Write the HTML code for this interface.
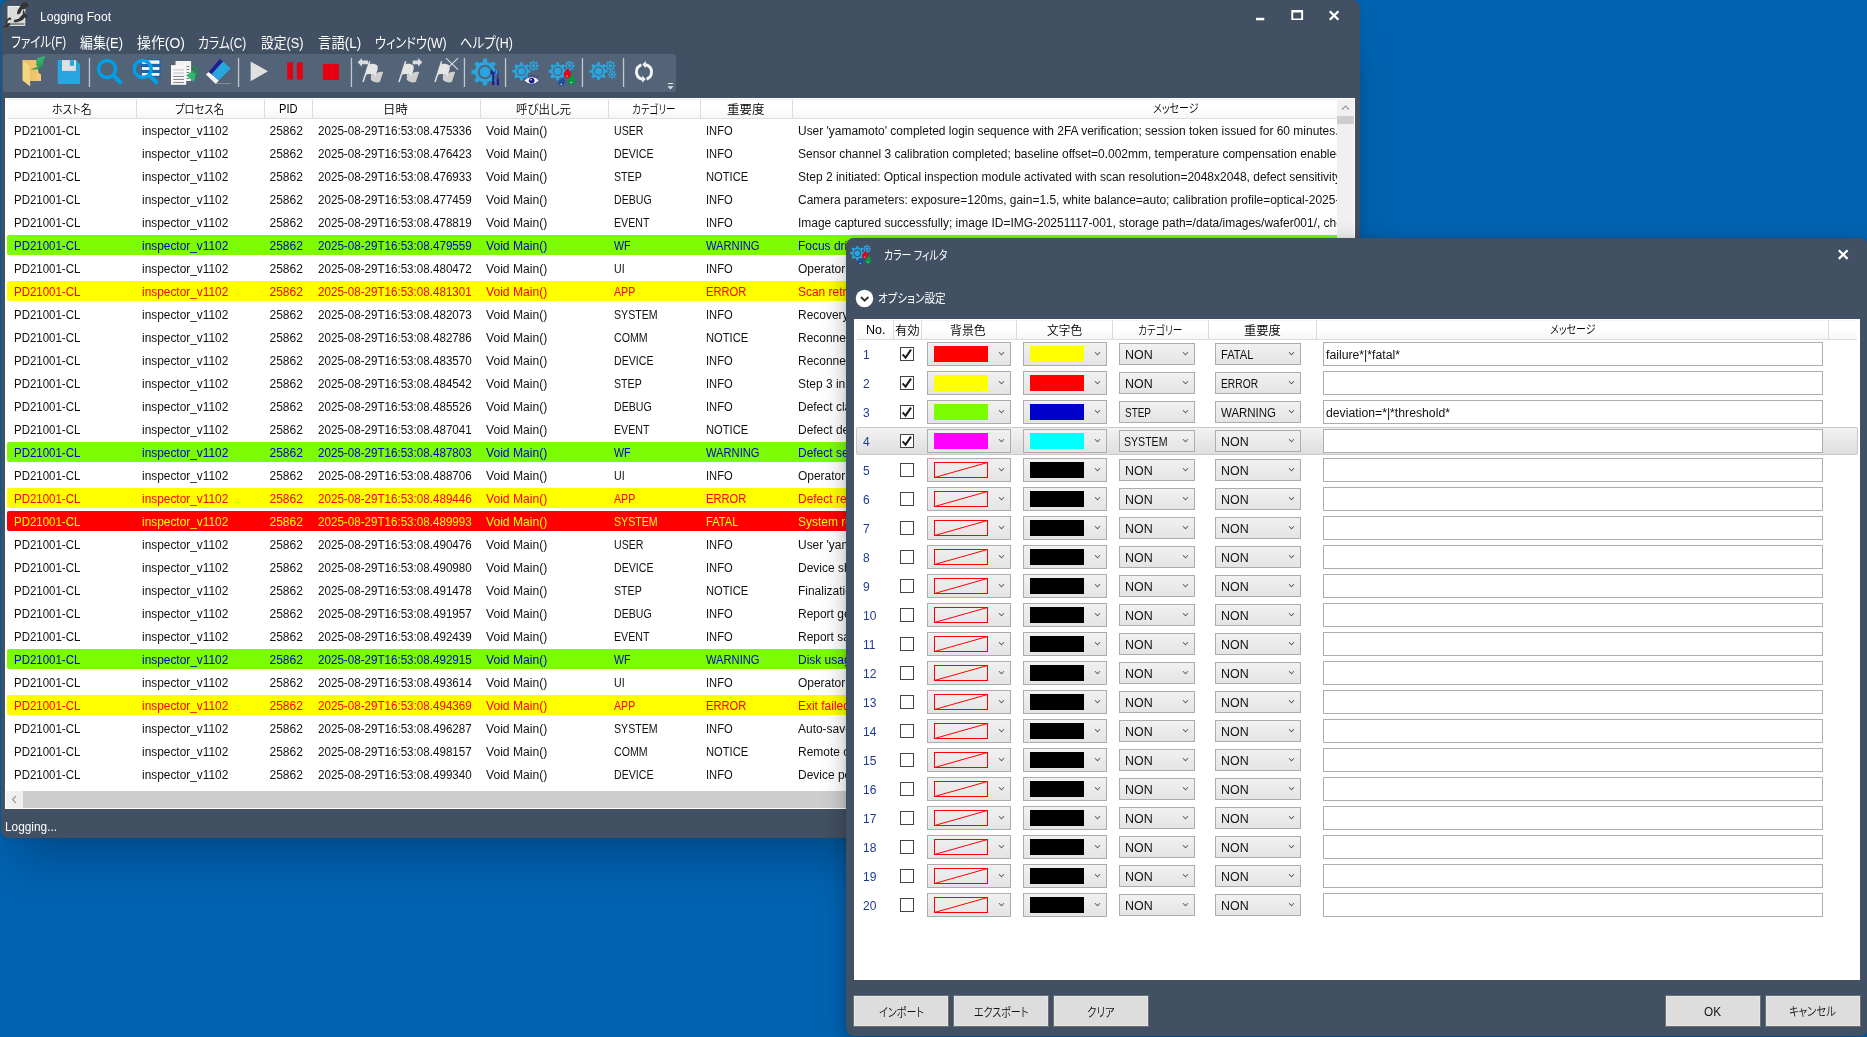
<!DOCTYPE html><html lang="ja"><head><meta charset="utf-8"><title>Logging Foot</title><style>*{box-sizing:border-box;margin:0;padding:0}
html,body{width:1867px;height:1037px;overflow:hidden;background:#0063b1}
body{position:relative;font-family:"Liberation Sans","Noto Sans CJK JP",sans-serif;font-size:12px;color:#000}
b,i,u,s{font-weight:normal;font-style:normal;text-decoration:none}
#desk{position:absolute;left:0;top:0;width:1867px;height:1037px;background:linear-gradient(180deg,#0063b1 0%,#0063b1 100%)}
#mw{will-change:transform;position:absolute;left:1px;top:0;width:1359px;height:838px;background:#415062;border-radius:8px 8px 0 8px;box-shadow:0 34px 44px -14px rgba(0,10,30,.27),0 0 8px rgba(0,10,30,.1)}
#mw-title{position:absolute;left:39px;top:9px;color:#fff;font-size:12px;line-height:16px;white-space:nowrap}
#menu{position:absolute;left:10px;top:33px;color:#fff;font-size:14px;line-height:20px;white-space:nowrap;font-feature-settings:"palt"}
#menu span{display:inline-block;margin-right:14px}
#tb{position:absolute;left:2px;top:54px;width:673px;height:38px;background:#536378;border-radius:3px}
#grid{position:absolute;left:4px;top:98px;width:1350px;height:711px;background:#fff;overflow:hidden}
#ghead,#dhead{position:absolute;left:0;top:1px;height:20px;width:100%}
#ghead{width:1332px;overflow:hidden}
.h{position:absolute;top:0;height:20px;line-height:19px;text-align:center;font-size:12.5px;border-top:1px solid #f3f3f3;border-right:1px solid #dcdcdc;border-bottom:1px solid #dedede;background:linear-gradient(#fff 0%,#fff 40%,#f5f6f7 100%);white-space:nowrap;font-feature-settings:"palt"}
.r{position:absolute;left:2px;width:1330px;height:20px;border-radius:2px 0 0 2px;overflow:hidden;color:#111}
.r i{position:absolute;top:0;line-height:23px;white-space:nowrap;font-size:12px;transform-origin:0 50%}
.c1{left:6.5px;transform:scaleX(.956)}.c2{left:134.5px;transform:scaleX(.99)}.c3{left:262.5px}.c4{left:310.5px;transform:scaleX(.968)}.c5{left:479px;transform:scaleX(1.01)}.c6{left:606.5px;transform:scaleX(.885)}.c7{left:698.5px;transform:scaleX(.93)}.c8{left:790.5px;transform:scaleX(.997)}
.r.cg{background:#7cfc00;color:#0000cd}
.r.cy{background:#ffff00;color:#ff0000}
.r.cr{background:#ff0000;color:#ffff00}
#vs{position:absolute;left:1332px;top:1px;width:17px;height:692px;background:#f0f0f0}
#vs svg,#hs svg{position:absolute;left:0;top:0}
#vthumb{position:absolute;left:0;top:17px;width:17px;height:8px;background:#cdcdcd}
#hs{position:absolute;left:1px;top:693px;width:1331px;height:17px;background:#f0f0f0}
#hthumb{position:absolute;left:17px;top:0;width:1400px;height:17px;background:#cdcdcd}
#status{position:absolute;left:4px;top:819px;color:#fff;font-size:12px;line-height:16px}
#dlg{will-change:transform;position:absolute;left:846px;top:238px;width:1022px;height:798px;background:#415062;border-radius:8px;box-shadow:0 8px 26px -2px rgba(0,0,0,.34),0 0 4px rgba(0,0,0,.1)}
#dlg-title{position:absolute;left:39px;top:9px;color:#fff;font-size:12.5px;line-height:18px;white-space:nowrap;font-feature-settings:"palt"}
#opt{position:absolute;left:32px;top:51px;color:#fff;font-size:12.5px;line-height:18px;white-space:nowrap;font-feature-settings:"palt"}
#dgrid{position:absolute;left:8px;top:81px;width:1006px;height:661px;background:#fff;overflow:hidden}
#dhead .h{}
.dr{position:absolute;left:0;width:1006px;height:29px}
.dr.sel:before{box-sizing:border-box;content:"";position:absolute;left:2px;top:0;width:1002px;height:28px;border:1px solid #c9c9c9;border-radius:2px;background:linear-gradient(#f3f3f3,#dedede)}
.dr b{position:absolute;display:block}
.no{left:9px;top:7px;line-height:16px;font-size:12px;color:#1f3a93}
.cb{left:46px;top:7px;width:14px;height:14px;border:1px solid #444;background:#fff}
.cb svg{position:absolute;left:-1px;top:-1px}
.cc{top:2px;width:84px;height:24px;border:1px solid #acacac;background:linear-gradient(#f1f1f1,#e4e4e4)}
.cc u{position:absolute;left:6px;top:3px;width:54px;height:16px;display:block}
.cc u.nul{border:1px solid #f00}
.cc u.nul svg{position:absolute;left:-1px;top:-1px}
.cm{top:3px;height:22px;border:1px solid #acacac;background:linear-gradient(#f1f1f1,#e4e4e4);font-size:12px;line-height:22px;padding-left:5px;color:#111}
.cm em{font-style:normal;display:inline-block;transform:scaleX(.9);transform-origin:0 50%;white-space:nowrap}
.dr s{position:absolute;right:6px;top:7px;width:5px;height:5px;border-right:1.3px solid #444;border-bottom:1.3px solid #444;transform:rotate(45deg) scale(.8);display:block}
.cm s{top:6px}
.tx{left:469px;top:2px;width:500px;height:24px;border:1px solid #abadb3;background:#fff;font-size:12px;line-height:24px;padding-left:2px;color:#111}
.btn{box-shadow:0 0 0 1px rgba(150,142,134,.5);position:absolute;top:758px;width:94px;height:30px;background:#ddd;border:1px solid #e6e6e6;text-align:center;line-height:28px;font-size:12.5px;color:#111;font-feature-settings:"palt"}
#ico{position:absolute;left:-1px;top:0}
#dico{position:absolute;left:0;top:0}
.ft{font-weight:350;position:absolute;height:20px;line-height:20px;transform-origin:0 50%;white-space:nowrap;font-feature-settings:"palt";display:block}
.tx em{font-style:normal;display:inline-block;transform:scaleX(1.02);transform-origin:0 50%;white-space:nowrap}
</style></head><body>
<div id="desk"></div>
<div id="mw">
<span class="ft" style="left:38.7px;top:7.0px;font-size:12px;transform:scaleX(1.014);color:#fff;font-weight:400">Logging Foot</span>
<span class="ft" style="left:9.6px;top:32.0px;font-size:14.5px;transform:scaleX(0.803);color:#fff;font-weight:400">ファイル(F)</span>
<span class="ft" style="left:79.1px;top:33.0px;font-size:14.5px;transform:scaleX(0.890);color:#fff;font-weight:400">編集(E)</span>
<span class="ft" style="left:136.0px;top:33.0px;font-size:14.5px;transform:scaleX(0.958);color:#fff;font-weight:400">操作(O)</span>
<span class="ft" style="left:197.2px;top:32.5px;font-size:14.5px;transform:scaleX(0.814);color:#fff;font-weight:400">カラム(C)</span>
<span class="ft" style="left:260.2px;top:33.0px;font-size:14.5px;transform:scaleX(0.881);color:#fff;font-weight:400">設定(S)</span>
<span class="ft" style="left:317.1px;top:32.5px;font-size:14.5px;transform:scaleX(0.924);color:#fff;font-weight:400">言語(L)</span>
<span class="ft" style="left:374.0px;top:32.5px;font-size:14.5px;transform:scaleX(0.841);color:#fff;font-weight:400">ウィンドウ(W)</span>
<span class="ft" style="left:458.7px;top:33.0px;font-size:14.5px;transform:scaleX(0.855);color:#fff;font-weight:400">ヘルプ(H)</span>
<div id="tb"></div>
<svg id="ico" width="1360" height="95" viewBox="0 0 1360 95">
<g><rect x="8" y="6.4" width="16.8" height="19" fill="#dcdcdc" stroke="#fbfbfb" stroke-width="0.9"/><rect x="8.5" y="22.8" width="15.9" height="2.3" fill="#8e8e8e"/><path fill="#343434" d="M23 2.6 L26.5 2.2 L28.8 5.6 L28.4 7.4 L26.6 6.6 L25 9 L22 9.6 L20.2 13.6 L18 14.6 L17 13.6 L17.6 10.6 L20 6.6 Z"/><path fill="#343434" d="M23.8 9.4 L25 13.4 L27.2 15.6 L26.6 18.6 L24.6 17.6 L22.8 20 L19 21.4 L15.4 22.6 L13.6 21.6 L14 20 L18.6 18.8 L20.6 16.6 L22.6 14.6 L23 11 Z"/><path fill="#343434" d="M9 17.4 L10.6 17.4 L11.6 19.4 L9.6 19.8 L8 20.8 L6.6 23.4 L9.6 23 L10.6 24.6 L8.6 26.2 L6 27.4 L3.4 27.6 L3.2 26.6 L6 25.4 L6.4 23.6 L5.4 23 L6.6 20 Z"/></g>
<defs><linearGradient id="fg" x1="0" x2="1"><stop offset="0" stop-color="#e9b766"/><stop offset="1" stop-color="#f8cb74"/></linearGradient><linearGradient id="gg" x1="0" y1="0" x2="0" y2="1"><stop offset="0" stop-color="#35bd75"/><stop offset="1" stop-color="#1f9a4c"/></linearGradient></defs>
<path fill="url(#fg)" d="M22.6 60.1 L36.4 60.1 L38.6 73 L41 74.4 L41 80.9 L29 80.9 Z"/>
<path fill="#f2d57e" d="M22.5 60.1 L29.3 65.4 L30.3 86.4 L22.5 80.6 Z"/>
<path fill="url(#gg)" d="M45.6 56 L37.2 58 L35.9 65.8 L38.4 64.2 L37.6 67 L30.2 69.6 L36 69.6 L39.8 68.6 L43 64.2 L43.6 59 Z"/>
<path fill="#29a5e0" d="M57.7 60.1 L76.1 60.1 L80 64.4 L80 83.9 L57.7 83.9 Z"/><rect x="62" y="60.1" width="13.9" height="10.8" fill="#e0e0e0"/><rect x="69.9" y="60.1" width="4.1" height="5.8" fill="#29a5e0"/>
<rect x="88.80000000000001" y="58" width="1.3" height="29" fill="#c3c8d0"/>
<rect x="237.9" y="58" width="1.3" height="29" fill="#c3c8d0"/>
<rect x="350.79999999999995" y="58" width="1.3" height="29" fill="#c3c8d0"/>
<rect x="463.79999999999995" y="58" width="1.3" height="29" fill="#c3c8d0"/>
<rect x="504.9" y="58" width="1.3" height="29" fill="#c3c8d0"/>
<rect x="581.8" y="58" width="1.3" height="29" fill="#c3c8d0"/>
<rect x="622.9" y="58" width="1.3" height="29" fill="#c3c8d0"/>
<g fill="none" stroke="#00a0e9" stroke-linecap="round"><circle cx="107.1" cy="68.9" r="8.5" stroke-width="3.5"/><path d="M113.6 75.6 L120.3 82.3" stroke-width="4.2"/></g>
<rect x="141" y="59.1" width="19.7" height="18" fill="#1565b5"/>
<rect x="141.9" y="60.4" width="17.5" height="3.4" fill="#fdf6ee"/>
<rect x="141.9" y="67.1" width="17.5" height="2.8" fill="#fdf6ee"/>
<rect x="141.9" y="73" width="17.5" height="2.8" fill="#fdf6ee"/>
<g fill="none" stroke="#00a0e9" stroke-linecap="round"><circle cx="142.7" cy="68.9" r="8.5" stroke-width="3.5"/><path d="M149.4 75.6 L156.3 82.3" stroke-width="4.2"/></g>
<rect x="175.5" y="61" width="15.6" height="20" fill="#f2f2f2"/>
<rect x="186.4" y="66.0" width="2.8" height="0.9" fill="#6e6e6e"/>
<rect x="186.4" y="69.0" width="2.8" height="0.9" fill="#6e6e6e"/>
<rect x="186.4" y="72.0" width="2.8" height="0.9" fill="#6e6e6e"/>
<rect x="186.4" y="75.0" width="2.8" height="0.9" fill="#6e6e6e"/>
<rect x="186.4" y="78.0" width="2.8" height="0.9" fill="#6e6e6e"/>
<rect x="171" y="65.1" width="15.2" height="19.7" fill="#f7f7f7"/>
<rect x="173.2" y="69.1" width="10.8" height="1.5" fill="#d2d2d2"/>
<rect x="173.2" y="72.3" width="10.8" height="1.5" fill="#d2d2d2"/>
<rect x="173.2" y="75.95" width="10.8" height="0.9" fill="#777"/>
<rect x="173.2" y="78.95" width="10.8" height="0.9" fill="#777"/>
<rect x="173.2" y="81.95" width="10.8" height="0.9" fill="#777"/>
<path fill="none" stroke="#1d8f48" stroke-width="2.2" d="M191.8 66.8 C197 66.6 198 73 194.6 77"/>
<path fill="#2fb670" d="M186.2 75.4 L193.4 70.2 L193 73.6 L195.6 72.6 L195 78 L194.1 82 Z"/>
<path fill="#f5f5f5" d="M205.9 74.5 L208.7 71.9 L218.8 80.5 L215.8 83.9 Z"/>
<path fill="#1e1e96" d="M208.7 71.9 L219.8 58.9 L223.1 61.6 L211.9 73.9 Z"/>
<path fill="#29a5e0" d="M211.9 73.9 L223.1 61.6 L230.6 68.5 L218.8 80.5 Z"/>
<rect x="216" y="83.1" width="14.6" height="1" fill="#8f8f8f"/>
<path fill="#e0e0e0" d="M250.6 61.6 L250.6 81.2 L268 71.3 Z"/>
<rect x="287.2" y="62.3" width="5.8" height="17.3" fill="#e60012"/><rect x="296.9" y="62.3" width="5.8" height="17.3" fill="#e60012"/>
<rect x="322.9" y="63.9" width="16.1" height="16.1" fill="#e60012"/>
<g transform="translate(0 0)"><path d="M369.7 61.2 L363 82" stroke="#e2e2e2" stroke-width="1.5" fill="none"/><path fill="#cfcfcf" d="M371 74 C374 75.6 375.6 74.6 377.6 72.6 C379.6 71.4 381.6 71.6 383.2 72 L379.8 82 C377 83 373.6 82.6 370.8 79.8 Z"/><path fill="#e5e5e5" d="M368.6 64.4 C371 63.4 375.2 63.6 377.6 65.8 L377.8 68.4 L375.6 76.4 C373.6 74 369 73.4 365.6 75 Z"/></g>
<g transform="translate(36 0)"><path d="M369.7 61.2 L363 82" stroke="#e2e2e2" stroke-width="1.5" fill="none"/><path fill="#cfcfcf" d="M371 74 C374 75.6 375.6 74.6 377.6 72.6 C379.6 71.4 381.6 71.6 383.2 72 L379.8 82 C377 83 373.6 82.6 370.8 79.8 Z"/><path fill="#e5e5e5" d="M368.6 64.4 C371 63.4 375.2 63.6 377.6 65.8 L377.8 68.4 L375.6 76.4 C373.6 74 369 73.4 365.6 75 Z"/></g>
<g transform="translate(72 0)"><path d="M369.7 61.2 L363 82" stroke="#e2e2e2" stroke-width="1.5" fill="none"/><path fill="#cfcfcf" d="M371 74 C374 75.6 375.6 74.6 377.6 72.6 C379.6 71.4 381.6 71.6 383.2 72 L379.8 82 C377 83 373.6 82.6 370.8 79.8 Z"/><path fill="#e5e5e5" d="M368.6 64.4 C371 63.4 375.2 63.6 377.6 65.8 L377.8 68.4 L375.6 76.4 C373.6 74 369 73.4 365.6 75 Z"/></g>
<path fill="#dcdcdc" d="M357.7 62.3 L361.9 58.1 L361.9 60.4 L368 60.4 L368 64.2 L361.9 64.2 L361.9 66.8 Z"/>
<path fill="#dcdcdc" d="M422.3 62.3 L418.1 58.1 L418.1 60.4 L412.7 60.4 L412.7 64.2 L418.1 64.2 L418.1 66.8 Z"/>
<path stroke="#dcdcdc" stroke-width="1.1" fill="none" d="M446.1 58.1 L458 69.7 M458 58.1 L447.7 68.1"/>
<g fill="#29a5e0"><path fill-rule="evenodd" d="M482.73 61.90 L483.08 58.59 L486.92 58.59 L487.27 61.90 L490.57 63.27 L493.17 61.17 L495.88 63.88 L493.78 66.48 L495.15 69.78 L498.46 70.13 L498.46 73.97 L495.15 74.32 L493.78 77.62 L495.88 80.22 L493.17 82.93 L490.57 80.83 L487.27 82.20 L486.92 85.51 L483.08 85.51 L482.73 82.20 L479.43 80.83 L476.83 82.93 L474.12 80.22 L476.22 77.62 L474.85 74.32 L471.54 73.97 L471.54 70.13 L474.85 69.78 L476.22 66.48 L474.12 63.88 L476.83 61.17 L479.43 63.27 Z M477.70 72.05 a7.30 7.30 0 1 0 14.60 0 a7.30 7.30 0 1 0 -14.60 0 Z M479.70 72.05 a5.30 5.30 0 1 0 10.60 0 a5.30 5.30 0 1 0 -10.60 0 Z"/></g>
<g fill="#1e1e96"><path d="M490.4 72.4 C490.2 70.6 491.6 69.8 493 69.9 L492.8 72.2 L494.4 72.4 L495 70.2 C496 71 496 73.4 494.2 74.4 L494.4 84.6 C494.2 85.6 492.2 85.6 492 84.6 L492.2 74.6 C491.2 74.2 490.6 73.4 490.4 72.4 Z"/><path d="M497.5 70 L498.2 70 L498.4 78.6 L499 79.2 L499 85 C498.8 85.6 497 85.6 496.8 85 L496.8 79.2 L497.4 78.6 Z"/></g>
<g fill="#29a5e0"><path fill-rule="evenodd" d="M519.89 64.57 L520.10 62.19 L522.70 62.19 L522.91 64.57 L525.10 65.47 L526.92 63.94 L528.76 65.78 L527.23 67.60 L528.13 69.79 L530.51 70.00 L530.51 72.60 L528.13 72.81 L527.23 75.00 L528.76 76.82 L526.92 78.66 L525.10 77.13 L522.91 78.03 L522.70 80.41 L520.10 80.41 L519.89 78.03 L517.70 77.13 L515.88 78.66 L514.04 76.82 L515.57 75.00 L514.67 72.81 L512.29 72.60 L512.29 70.00 L514.67 69.79 L515.57 67.60 L514.04 65.78 L515.88 63.94 L517.70 65.47 Z M516.60 71.30 a4.80 4.80 0 1 0 9.60 0 a4.80 4.80 0 1 0 -9.60 0 Z M517.90 71.30 a3.50 3.50 0 1 0 7.00 0 a3.50 3.50 0 1 0 -7.00 0 Z"/><path fill-rule="evenodd" d="M532.65 61.99 L532.75 60.55 L534.25 60.55 L534.35 61.99 L535.59 62.51 L536.68 61.56 L537.74 62.62 L536.79 63.71 L537.31 64.95 L538.75 65.05 L538.75 66.55 L537.31 66.65 L536.79 67.89 L537.74 68.98 L536.68 70.04 L535.59 69.09 L534.35 69.61 L534.25 71.05 L532.75 71.05 L532.65 69.61 L531.41 69.09 L530.32 70.04 L529.26 68.98 L530.21 67.89 L529.69 66.65 L528.25 66.55 L528.25 65.05 L529.69 64.95 L530.21 63.71 L529.26 62.62 L530.32 61.56 L531.41 62.51 Z M530.90 65.80 a2.60 2.60 0 1 0 5.20 0 a2.60 2.60 0 1 0 -5.20 0 Z M531.80 65.80 a1.70 1.70 0 1 0 3.40 0 a1.70 1.70 0 1 0 -3.40 0 Z"/></g>
<path fill="#fff" stroke="#1e1e96" stroke-width="0.7" d="M524.2 80.6 C528 75.6 535.4 75.6 539 80.6 C535.4 85.4 528 85.4 524.2 80.6 Z"/><circle cx="531.7" cy="80.6" r="2.9" fill="#1e1e96"/><circle cx="531" cy="79.8" r="0.8" fill="#fff"/><path stroke="#1e1e96" stroke-width="0.7" fill="none" d="M526.6 77.2 L525.8 75.8 M529 76.4 L528.6 75 M531.7 76 L531.7 74.6 M534.4 76.4 L534.8 75 M536.8 77.2 L537.6 75.8"/>
<g fill="#29a5e0"><path fill-rule="evenodd" d="M556.09 64.57 L556.30 62.19 L558.90 62.19 L559.11 64.57 L561.30 65.47 L563.12 63.94 L564.96 65.78 L563.43 67.60 L564.33 69.79 L566.71 70.00 L566.71 72.60 L564.33 72.81 L563.43 75.00 L564.96 76.82 L563.12 78.66 L561.30 77.13 L559.11 78.03 L558.90 80.41 L556.30 80.41 L556.09 78.03 L553.90 77.13 L552.08 78.66 L550.24 76.82 L551.77 75.00 L550.87 72.81 L548.49 72.60 L548.49 70.00 L550.87 69.79 L551.77 67.60 L550.24 65.78 L552.08 63.94 L553.90 65.47 Z M552.80 71.30 a4.80 4.80 0 1 0 9.60 0 a4.80 4.80 0 1 0 -9.60 0 Z M554.10 71.30 a3.50 3.50 0 1 0 7.00 0 a3.50 3.50 0 1 0 -7.00 0 Z"/><path fill-rule="evenodd" d="M568.75 61.99 L568.85 60.55 L570.35 60.55 L570.45 61.99 L571.69 62.51 L572.78 61.56 L573.84 62.62 L572.89 63.71 L573.41 64.95 L574.85 65.05 L574.85 66.55 L573.41 66.65 L572.89 67.89 L573.84 68.98 L572.78 70.04 L571.69 69.09 L570.45 69.61 L570.35 71.05 L568.85 71.05 L568.75 69.61 L567.51 69.09 L566.42 70.04 L565.36 68.98 L566.31 67.89 L565.79 66.65 L564.35 66.55 L564.35 65.05 L565.79 64.95 L566.31 63.71 L565.36 62.62 L566.42 61.56 L567.51 62.51 Z M567.00 65.80 a2.60 2.60 0 1 0 5.20 0 a2.60 2.60 0 1 0 -5.20 0 Z M567.90 65.80 a1.70 1.70 0 1 0 3.40 0 a1.70 1.70 0 1 0 -3.40 0 Z"/></g>
<path fill="#e60012" d="M568 67.2 C568 70.2 571.1999999999999 71.35 570.9 74.5 A3.5 3.5 0 1 1 563.9 74.5 C563.6 71.35 567.4 70.2 568 67.2 Z"/><circle cx="567.0" cy="76.1" r="0.7" fill="#fff"/>
<path fill="#1e50a2" d="M564 76.2 C564 79.2 565.1999999999999 79.63 564.9 82.6 A3.3 3.3 0 1 1 558.3000000000001 82.6 C558.0000000000001 79.63 563.4 79.2 564 76.2 Z"/><circle cx="561.2" cy="84.19999999999999" r="0.7" fill="#fff"/>
<path fill="#009944" d="M572.4 73.6 C572.4 76.6 575.4 77.75 575.1 80.9 A3.5 3.5 0 1 1 568.1 80.9 C567.8000000000001 77.75 571.8 76.6 572.4 73.6 Z"/><circle cx="571.2" cy="82.5" r="0.7" fill="#fff"/>
<g fill="#29a5e0"><path fill-rule="evenodd" d="M596.99 64.47 L597.20 62.09 L599.80 62.09 L600.01 64.47 L602.20 65.37 L604.02 63.84 L605.86 65.68 L604.33 67.50 L605.23 69.69 L607.61 69.90 L607.61 72.50 L605.23 72.71 L604.33 74.90 L605.86 76.72 L604.02 78.56 L602.20 77.03 L600.01 77.93 L599.80 80.31 L597.20 80.31 L596.99 77.93 L594.80 77.03 L592.98 78.56 L591.14 76.72 L592.67 74.90 L591.77 72.71 L589.39 72.50 L589.39 69.90 L591.77 69.69 L592.67 67.50 L591.14 65.68 L592.98 63.84 L594.80 65.37 Z M593.70 71.20 a4.80 4.80 0 1 0 9.60 0 a4.80 4.80 0 1 0 -9.60 0 Z M595.00 71.20 a3.50 3.50 0 1 0 7.00 0 a3.50 3.50 0 1 0 -7.00 0 Z"/><path fill-rule="evenodd" d="M609.45 61.99 L609.55 60.55 L611.05 60.55 L611.15 61.99 L612.39 62.51 L613.48 61.56 L614.54 62.62 L613.59 63.71 L614.11 64.95 L615.55 65.05 L615.55 66.55 L614.11 66.65 L613.59 67.89 L614.54 68.98 L613.48 70.04 L612.39 69.09 L611.15 69.61 L611.05 71.05 L609.55 71.05 L609.45 69.61 L608.21 69.09 L607.12 70.04 L606.06 68.98 L607.01 67.89 L606.49 66.65 L605.05 66.55 L605.05 65.05 L606.49 64.95 L607.01 63.71 L606.06 62.62 L607.12 61.56 L608.21 62.51 Z M607.60 65.80 a2.70 2.70 0 1 0 5.40 0 a2.70 2.70 0 1 0 -5.40 0 Z M608.50 65.80 a1.80 1.80 0 1 0 3.60 0 a1.80 1.80 0 1 0 -3.60 0 Z"/><path fill-rule="evenodd" d="M611.60 71.38 L611.68 70.14 L612.92 70.14 L613.00 71.38 L614.01 71.80 L614.94 70.98 L615.82 71.86 L615.00 72.79 L615.42 73.80 L616.66 73.88 L616.66 75.12 L615.42 75.20 L615.00 76.21 L615.82 77.14 L614.94 78.02 L614.01 77.20 L613.00 77.62 L612.92 78.86 L611.68 78.86 L611.60 77.62 L610.59 77.20 L609.66 78.02 L608.78 77.14 L609.60 76.21 L609.18 75.20 L607.94 75.12 L607.94 73.88 L609.18 73.80 L609.60 72.79 L608.78 71.86 L609.66 70.98 L610.59 71.80 Z M610.10 74.50 a2.20 2.20 0 1 0 4.40 0 a2.20 2.20 0 1 0 -4.40 0 Z M610.90 74.50 a1.40 1.40 0 1 0 2.80 0 a1.40 1.40 0 1 0 -2.80 0 Z"/></g>
<g fill="none" stroke="#f4f4f4" stroke-width="2.9"><path d="M641.4 64.95 A7.5 7.5 0 0 0 642.06 79.24"/><path d="M646.57 79.05 A7.5 7.5 0 0 0 645.94 64.76"/></g>
<path fill="#f4f4f4" d="M645.7 79.3 L642.1 75.6 L642.1 82.7 Z"/><path fill="#f4f4f4" d="M642.3 64.6 L645.9 60.9 L645.9 68.3 Z"/>
<rect x="667.9" y="83" width="5.2" height="1.1" fill="#dfe2e6"/><path fill="#dfe2e6" d="M667.4 86.2 L673.6 86.2 L670.5 89.6 Z"/>
<rect x="1256" y="17.8" width="8.3" height="2.5" fill="#fff"/>
<path fill="#fff" fill-rule="evenodd" d="M1291.3 10 H1303.1 V20 H1291.3 Z M1293.2 12.5 H1301.2 V18.5 H1293.2 Z"/>
<path stroke="#fff" stroke-width="2.3" fill="none" d="M1329.8 11.3 L1338.4 19.7 M1338.4 11.3 L1329.8 19.7"/>
</svg>
<div id="grid">
<div id="ghead"><div class="h" style="left:3px;width:129px"></div><div class="h" style="left:132px;width:128px"></div><div class="h" style="left:260px;width:48px"></div><div class="h" style="left:308px;width:168px"></div><div class="h" style="left:476px;width:128px"></div><div class="h" style="left:604px;width:92px"></div><div class="h" style="left:696px;width:92px"></div><div class="h" style="left:788px;width:768px"></div></div>
<span class="ft" style="left:46.5px;top:1.5px;font-size:12px;transform:scaleX(0.910);">ホスト名</span>
<span class="ft" style="left:169.6px;top:1.5px;font-size:12px;transform:scaleX(0.860);">プロセス名</span>
<span class="ft" style="left:273.6px;top:1.0px;font-size:12px;transform:scaleX(0.926);">PID</span>
<span class="ft" style="left:378.1px;top:1.5px;font-size:12px;transform:scaleX(1.032);">日時</span>
<span class="ft" style="left:511.4px;top:1.5px;font-size:12px;transform:scaleX(0.954);">呼び出し元</span>
<span class="ft" style="left:627.4px;top:2.0px;font-size:12px;transform:scaleX(0.794);">カテゴリー</span>
<span class="ft" style="left:722.1px;top:1.5px;font-size:12px;transform:scaleX(1.038);">重要度</span>
<span class="ft" style="left:1148.3px;top:1.0px;font-size:12px;transform:scaleX(0.834);">メッセージ</span>
<div class="r " style="top:22px"><i class="c1">PD21001-CL</i><i class="c2">inspector_v1102</i><i class="c3">25862</i><i class="c4">2025-08-29T16:53:08.475336</i><i class="c5">Void Main()</i><i class="c6">USER</i><i class="c7">INFO</i><i class="c8">User 'yamamoto' completed login sequence with 2FA verification; session token issued for 60 minutes. Next</i></div>
<div class="r " style="top:45px"><i class="c1">PD21001-CL</i><i class="c2">inspector_v1102</i><i class="c3">25862</i><i class="c4">2025-08-29T16:53:08.476423</i><i class="c5">Void Main()</i><i class="c6">DEVICE</i><i class="c7">INFO</i><i class="c8">Sensor channel 3 calibration completed; baseline offset=0.002mm, temperature compensation enabled, drift</i></div>
<div class="r " style="top:68px"><i class="c1">PD21001-CL</i><i class="c2">inspector_v1102</i><i class="c3">25862</i><i class="c4">2025-08-29T16:53:08.476933</i><i class="c5">Void Main()</i><i class="c6">STEP</i><i class="c7">NOTICE</i><i class="c8">Step 2 initiated: Optical inspection module activated with scan resolution=2048x2048, defect sensitivity=high</i></div>
<div class="r " style="top:91px"><i class="c1">PD21001-CL</i><i class="c2">inspector_v1102</i><i class="c3">25862</i><i class="c4">2025-08-29T16:53:08.477459</i><i class="c5">Void Main()</i><i class="c6">DEBUG</i><i class="c7">INFO</i><i class="c8">Camera parameters: exposure=120ms, gain=1.5, white balance=auto; calibration profile=optical-2025-11</i></div>
<div class="r " style="top:114px"><i class="c1">PD21001-CL</i><i class="c2">inspector_v1102</i><i class="c3">25862</i><i class="c4">2025-08-29T16:53:08.478819</i><i class="c5">Void Main()</i><i class="c6">EVENT</i><i class="c7">INFO</i><i class="c8">Image captured successfully; image ID=IMG-20251117-001, storage path=/data/images/wafer001/, checksum</i></div>
<div class="r cg" style="top:137px"><i class="c1">PD21001-CL</i><i class="c2">inspector_v1102</i><i class="c3">25862</i><i class="c4">2025-08-29T16:53:08.479559</i><i class="c5">Void Main()</i><i class="c6">WF</i><i class="c7">WARNING</i><i class="c8">Focus drift detected; deviation=0.004mm exceeds threshold</i></div>
<div class="r " style="top:160px"><i class="c1">PD21001-CL</i><i class="c2">inspector_v1102</i><i class="c3">25862</i><i class="c4">2025-08-29T16:53:08.480472</i><i class="c5">Void Main()</i><i class="c6">UI</i><i class="c7">INFO</i><i class="c8">Operator acknowledged warning</i></div>
<div class="r cy" style="top:183px"><i class="c1">PD21001-CL</i><i class="c2">inspector_v1102</i><i class="c3">25862</i><i class="c4">2025-08-29T16:53:08.481301</i><i class="c5">Void Main()</i><i class="c6">APP</i><i class="c7">ERROR</i><i class="c8">Scan retry failed</i></div>
<div class="r " style="top:206px"><i class="c1">PD21001-CL</i><i class="c2">inspector_v1102</i><i class="c3">25862</i><i class="c4">2025-08-29T16:53:08.482073</i><i class="c5">Void Main()</i><i class="c6">SYSTEM</i><i class="c7">INFO</i><i class="c8">Recovery sequence started</i></div>
<div class="r " style="top:229px"><i class="c1">PD21001-CL</i><i class="c2">inspector_v1102</i><i class="c3">25862</i><i class="c4">2025-08-29T16:53:08.482786</i><i class="c5">Void Main()</i><i class="c6">COMM</i><i class="c7">NOTICE</i><i class="c8">Reconnecting to host</i></div>
<div class="r " style="top:252px"><i class="c1">PD21001-CL</i><i class="c2">inspector_v1102</i><i class="c3">25862</i><i class="c4">2025-08-29T16:53:08.483570</i><i class="c5">Void Main()</i><i class="c6">DEVICE</i><i class="c7">INFO</i><i class="c8">Reconnected to device</i></div>
<div class="r " style="top:275px"><i class="c1">PD21001-CL</i><i class="c2">inspector_v1102</i><i class="c3">25862</i><i class="c4">2025-08-29T16:53:08.484542</i><i class="c5">Void Main()</i><i class="c6">STEP</i><i class="c7">INFO</i><i class="c8">Step 3 initiated</i></div>
<div class="r " style="top:298px"><i class="c1">PD21001-CL</i><i class="c2">inspector_v1102</i><i class="c3">25862</i><i class="c4">2025-08-29T16:53:08.485526</i><i class="c5">Void Main()</i><i class="c6">DEBUG</i><i class="c7">INFO</i><i class="c8">Defect classification running</i></div>
<div class="r " style="top:321px"><i class="c1">PD21001-CL</i><i class="c2">inspector_v1102</i><i class="c3">25862</i><i class="c4">2025-08-29T16:53:08.487041</i><i class="c5">Void Main()</i><i class="c6">EVENT</i><i class="c7">NOTICE</i><i class="c8">Defect detected</i></div>
<div class="r cg" style="top:344px"><i class="c1">PD21001-CL</i><i class="c2">inspector_v1102</i><i class="c3">25862</i><i class="c4">2025-08-29T16:53:08.487803</i><i class="c5">Void Main()</i><i class="c6">WF</i><i class="c7">WARNING</i><i class="c8">Defect severity above threshold</i></div>
<div class="r " style="top:367px"><i class="c1">PD21001-CL</i><i class="c2">inspector_v1102</i><i class="c3">25862</i><i class="c4">2025-08-29T16:53:08.488706</i><i class="c5">Void Main()</i><i class="c6">UI</i><i class="c7">INFO</i><i class="c8">Operator opened review</i></div>
<div class="r cy" style="top:390px"><i class="c1">PD21001-CL</i><i class="c2">inspector_v1102</i><i class="c3">25862</i><i class="c4">2025-08-29T16:53:08.489446</i><i class="c5">Void Main()</i><i class="c6">APP</i><i class="c7">ERROR</i><i class="c8">Defect report failed</i></div>
<div class="r cr" style="top:413px"><i class="c1">PD21001-CL</i><i class="c2">inspector_v1102</i><i class="c3">25862</i><i class="c4">2025-08-29T16:53:08.489993</i><i class="c5">Void Main()</i><i class="c6">SYSTEM</i><i class="c7">FATAL</i><i class="c8">System resource failure</i></div>
<div class="r " style="top:436px"><i class="c1">PD21001-CL</i><i class="c2">inspector_v1102</i><i class="c3">25862</i><i class="c4">2025-08-29T16:53:08.490476</i><i class="c5">Void Main()</i><i class="c6">USER</i><i class="c7">INFO</i><i class="c8">User 'yamamoto' logged out</i></div>
<div class="r " style="top:459px"><i class="c1">PD21001-CL</i><i class="c2">inspector_v1102</i><i class="c3">25862</i><i class="c4">2025-08-29T16:53:08.490980</i><i class="c5">Void Main()</i><i class="c6">DEVICE</i><i class="c7">INFO</i><i class="c8">Device shutdown requested</i></div>
<div class="r " style="top:482px"><i class="c1">PD21001-CL</i><i class="c2">inspector_v1102</i><i class="c3">25862</i><i class="c4">2025-08-29T16:53:08.491478</i><i class="c5">Void Main()</i><i class="c6">STEP</i><i class="c7">NOTICE</i><i class="c8">Finalization step started</i></div>
<div class="r " style="top:505px"><i class="c1">PD21001-CL</i><i class="c2">inspector_v1102</i><i class="c3">25862</i><i class="c4">2025-08-29T16:53:08.491957</i><i class="c5">Void Main()</i><i class="c6">DEBUG</i><i class="c7">INFO</i><i class="c8">Report generation running</i></div>
<div class="r " style="top:528px"><i class="c1">PD21001-CL</i><i class="c2">inspector_v1102</i><i class="c3">25862</i><i class="c4">2025-08-29T16:53:08.492439</i><i class="c5">Void Main()</i><i class="c6">EVENT</i><i class="c7">INFO</i><i class="c8">Report saved</i></div>
<div class="r cg" style="top:551px"><i class="c1">PD21001-CL</i><i class="c2">inspector_v1102</i><i class="c3">25862</i><i class="c4">2025-08-29T16:53:08.492915</i><i class="c5">Void Main()</i><i class="c6">WF</i><i class="c7">WARNING</i><i class="c8">Disk usage above threshold</i></div>
<div class="r " style="top:574px"><i class="c1">PD21001-CL</i><i class="c2">inspector_v1102</i><i class="c3">25862</i><i class="c4">2025-08-29T16:53:08.493614</i><i class="c5">Void Main()</i><i class="c6">UI</i><i class="c7">INFO</i><i class="c8">Operator closed review</i></div>
<div class="r cy" style="top:597px"><i class="c1">PD21001-CL</i><i class="c2">inspector_v1102</i><i class="c3">25862</i><i class="c4">2025-08-29T16:53:08.494369</i><i class="c5">Void Main()</i><i class="c6">APP</i><i class="c7">ERROR</i><i class="c8">Exit failed</i></div>
<div class="r " style="top:620px"><i class="c1">PD21001-CL</i><i class="c2">inspector_v1102</i><i class="c3">25862</i><i class="c4">2025-08-29T16:53:08.496287</i><i class="c5">Void Main()</i><i class="c6">SYSTEM</i><i class="c7">INFO</i><i class="c8">Auto-save completed</i></div>
<div class="r " style="top:643px"><i class="c1">PD21001-CL</i><i class="c2">inspector_v1102</i><i class="c3">25862</i><i class="c4">2025-08-29T16:53:08.498157</i><i class="c5">Void Main()</i><i class="c6">COMM</i><i class="c7">NOTICE</i><i class="c8">Remote connection closed</i></div>
<div class="r " style="top:666px"><i class="c1">PD21001-CL</i><i class="c2">inspector_v1102</i><i class="c3">25862</i><i class="c4">2025-08-29T16:53:08.499340</i><i class="c5">Void Main()</i><i class="c6">DEVICE</i><i class="c7">INFO</i><i class="c8">Device powered down</i></div>
<div id="vs"><svg width="17" height="17" viewBox="0 0 17 17"><path d="M5 10.5 L8.5 7 L12 10.5" fill="none" stroke="#999" stroke-width="1.2"/></svg><div id="vthumb"></div></div>
<div id="hs"><svg width="17" height="17" viewBox="0 0 17 17"><path d="M10 5 L6.5 8.5 L10 12" fill="none" stroke="#999" stroke-width="1.2"/></svg><div id="hthumb"></div></div>
</div>
<span class="ft" style="left:3.5px;top:816.8px;font-size:12px;transform:scaleX(0.988);color:#fff;font-weight:400">Logging...</span>
</div>
<div id="dlg">
<span class="ft" style="left:38.2px;top:7.9px;font-size:12.5px;transform:scaleX(0.786);color:#fff;font-weight:400">カラー フィルタ</span>
<span class="ft" style="left:31.5px;top:51.3px;font-size:12.5px;transform:scaleX(0.844);color:#fff;font-weight:400">オプション設定</span>
<svg id="dico" width="1021" height="100" viewBox="846 238 1021 100">
<g transform="translate(850 244.7) scale(0.79) translate(-548.4 -60.6)">
<g fill="#29a5e0"><path fill-rule="evenodd" d="M556.09 64.57 L556.30 62.19 L558.90 62.19 L559.11 64.57 L561.30 65.47 L563.12 63.94 L564.96 65.78 L563.43 67.60 L564.33 69.79 L566.71 70.00 L566.71 72.60 L564.33 72.81 L563.43 75.00 L564.96 76.82 L563.12 78.66 L561.30 77.13 L559.11 78.03 L558.90 80.41 L556.30 80.41 L556.09 78.03 L553.90 77.13 L552.08 78.66 L550.24 76.82 L551.77 75.00 L550.87 72.81 L548.49 72.60 L548.49 70.00 L550.87 69.79 L551.77 67.60 L550.24 65.78 L552.08 63.94 L553.90 65.47 Z M552.80 71.30 a4.80 4.80 0 1 0 9.60 0 a4.80 4.80 0 1 0 -9.60 0 Z M554.10 71.30 a3.50 3.50 0 1 0 7.00 0 a3.50 3.50 0 1 0 -7.00 0 Z"/><path fill-rule="evenodd" d="M568.75 61.99 L568.85 60.55 L570.35 60.55 L570.45 61.99 L571.69 62.51 L572.78 61.56 L573.84 62.62 L572.89 63.71 L573.41 64.95 L574.85 65.05 L574.85 66.55 L573.41 66.65 L572.89 67.89 L573.84 68.98 L572.78 70.04 L571.69 69.09 L570.45 69.61 L570.35 71.05 L568.85 71.05 L568.75 69.61 L567.51 69.09 L566.42 70.04 L565.36 68.98 L566.31 67.89 L565.79 66.65 L564.35 66.55 L564.35 65.05 L565.79 64.95 L566.31 63.71 L565.36 62.62 L566.42 61.56 L567.51 62.51 Z M567.00 65.80 a2.60 2.60 0 1 0 5.20 0 a2.60 2.60 0 1 0 -5.20 0 Z M567.90 65.80 a1.70 1.70 0 1 0 3.40 0 a1.70 1.70 0 1 0 -3.40 0 Z"/></g>
<path fill="#e60012" d="M568 67.2 C568 70.2 571.1999999999999 71.35 570.9 74.5 A3.5 3.5 0 1 1 563.9 74.5 C563.6 71.35 567.4 70.2 568 67.2 Z"/><circle cx="567.0" cy="76.1" r="0.7" fill="#fff"/>
<path fill="#1e50a2" d="M564 76.2 C564 79.2 565.1999999999999 79.63 564.9 82.6 A3.3 3.3 0 1 1 558.3000000000001 82.6 C558.0000000000001 79.63 563.4 79.2 564 76.2 Z"/><circle cx="561.2" cy="84.19999999999999" r="0.7" fill="#fff"/>
<path fill="#009944" d="M572.4 73.6 C572.4 76.6 575.4 77.75 575.1 80.9 A3.5 3.5 0 1 1 568.1 80.9 C567.8000000000001 77.75 571.8 76.6 572.4 73.6 Z"/><circle cx="571.2" cy="82.5" r="0.7" fill="#fff"/>
</g>
<path stroke="#fff" stroke-width="2.3" fill="none" d="M1838.8 250.3 L1847.6 258.9 M1847.6 250.3 L1838.8 258.9"/>
<circle cx="864.5" cy="298.5" r="8.7" fill="#fff"/><path d="M861 297 L864.6 300.6 L868.4 297" fill="none" stroke="#333" stroke-width="1.9"/>
</svg>
<div id="dgrid">
<div id="dhead"><div class="h" style="left:3px;width:37px"></div><div class="h" style="left:40px;width:28px"></div><div class="h" style="left:68px;width:95px"></div><div class="h" style="left:163px;width:96px"></div><div class="h" style="left:259px;width:96px"></div><div class="h" style="left:355px;width:108px"></div><div class="h" style="left:463px;width:512px"></div><div class="h" style="left:975px;width:28px;border-right:0"></div></div>
<span class="ft" style="left:11.6px;top:1.2px;font-size:12px;transform:scaleX(1.041);">No.</span>
<span class="ft" style="left:40.7px;top:1.7px;font-size:12px;transform:scaleX(1.027);">有効</span>
<span class="ft" style="left:96.2px;top:1.7px;font-size:12px;transform:scaleX(0.994);">背景色</span>
<span class="ft" style="left:192.6px;top:1.7px;font-size:12px;transform:scaleX(0.974);">文字色</span>
<span class="ft" style="left:284.4px;top:2.2px;font-size:12px;transform:scaleX(0.809);">カテゴリー</span>
<span class="ft" style="left:390.0px;top:1.7px;font-size:12px;transform:scaleX(1.024);">重要度</span>
<span class="ft" style="left:695.7px;top:1.2px;font-size:12px;transform:scaleX(0.832);">メッセージ</span>
<div class="dr" style="top:21px">
<b class="no">1</b>
<b class="cb"><svg width="14" height="14" viewBox="0 0 14 14"><path d="M2.6 7.4 L5.6 10.6 L11 2.6" fill="none" stroke="#1a1a1a" stroke-width="2"/></svg></b>
<b class="cc" style="left:73px"><u style="background:#ff0000"></u><s></s></b>
<b class="cc" style="left:169px"><u style="background:#ffff00"></u><s></s></b>
<b class="cm" style="left:265px;width:76px"><s></s></b>
<b class="cm" style="left:361px;width:86px"><s></s></b>
<b class="tx"><em>failure*|*fatal*</em></b>
</div>
<span class="ft" style="left:270.7px;top:25.8px;font-size:12px;transform:scaleX(1.036);color:#111">NON</span>
<span class="ft" style="left:366.5px;top:25.8px;font-size:12px;transform:scaleX(0.929);color:#111">FATAL</span>
<div class="dr" style="top:50px">
<b class="no">2</b>
<b class="cb"><svg width="14" height="14" viewBox="0 0 14 14"><path d="M2.6 7.4 L5.6 10.6 L11 2.6" fill="none" stroke="#1a1a1a" stroke-width="2"/></svg></b>
<b class="cc" style="left:73px"><u style="background:#ffff00"></u><s></s></b>
<b class="cc" style="left:169px"><u style="background:#ff0000"></u><s></s></b>
<b class="cm" style="left:265px;width:76px"><s></s></b>
<b class="cm" style="left:361px;width:86px"><s></s></b>
<b class="tx"><em></em></b>
</div>
<span class="ft" style="left:270.7px;top:54.8px;font-size:12px;transform:scaleX(1.036);color:#111">NON</span>
<span class="ft" style="left:366.5px;top:54.8px;font-size:12px;transform:scaleX(0.855);color:#111">ERROR</span>
<div class="dr" style="top:79px">
<b class="no">3</b>
<b class="cb"><svg width="14" height="14" viewBox="0 0 14 14"><path d="M2.6 7.4 L5.6 10.6 L11 2.6" fill="none" stroke="#1a1a1a" stroke-width="2"/></svg></b>
<b class="cc" style="left:73px"><u style="background:#7cfc00"></u><s></s></b>
<b class="cc" style="left:169px"><u style="background:#0000cd"></u><s></s></b>
<b class="cm" style="left:265px;width:76px"><s></s></b>
<b class="cm" style="left:361px;width:86px"><s></s></b>
<b class="tx"><em>deviation=*|*threshold*</em></b>
</div>
<span class="ft" style="left:270.5px;top:83.8px;font-size:12px;transform:scaleX(0.830);color:#111">STEP</span>
<span class="ft" style="left:367.4px;top:83.8px;font-size:12px;transform:scaleX(0.954);color:#111">WARNING</span>
<div class="dr sel" style="top:108px">
<b class="no">4</b>
<b class="cb"><svg width="14" height="14" viewBox="0 0 14 14"><path d="M2.6 7.4 L5.6 10.6 L11 2.6" fill="none" stroke="#1a1a1a" stroke-width="2"/></svg></b>
<b class="cc" style="left:73px"><u style="background:#ff00ff"></u><s></s></b>
<b class="cc" style="left:169px"><u style="background:#00ffff"></u><s></s></b>
<b class="cm" style="left:265px;width:76px"><s></s></b>
<b class="cm" style="left:361px;width:86px"><s></s></b>
<b class="tx"><em></em></b>
</div>
<span class="ft" style="left:270.4px;top:112.8px;font-size:12px;transform:scaleX(0.881);color:#111">SYSTEM</span>
<span class="ft" style="left:366.7px;top:112.8px;font-size:12px;transform:scaleX(1.036);color:#111">NON</span>
<div class="dr" style="top:137px">
<b class="no">5</b>
<b class="cb"></b>
<b class="cc" style="left:73px"><u class="nul"><svg width="54" height="16" viewBox="0 0 54 16"><path d="M0.5 15.5 L53.5 0.5" stroke="#ff0000" stroke-width="1" fill="none"/></svg></u><s></s></b>
<b class="cc" style="left:169px"><u style="background:#000000"></u><s></s></b>
<b class="cm" style="left:265px;width:76px"><s></s></b>
<b class="cm" style="left:361px;width:86px"><s></s></b>
<b class="tx"><em></em></b>
</div>
<span class="ft" style="left:270.7px;top:141.8px;font-size:12px;transform:scaleX(1.036);color:#111">NON</span>
<span class="ft" style="left:366.7px;top:141.8px;font-size:12px;transform:scaleX(1.036);color:#111">NON</span>
<div class="dr" style="top:166px">
<b class="no">6</b>
<b class="cb"></b>
<b class="cc" style="left:73px"><u class="nul"><svg width="54" height="16" viewBox="0 0 54 16"><path d="M0.5 15.5 L53.5 0.5" stroke="#ff0000" stroke-width="1" fill="none"/></svg></u><s></s></b>
<b class="cc" style="left:169px"><u style="background:#000000"></u><s></s></b>
<b class="cm" style="left:265px;width:76px"><s></s></b>
<b class="cm" style="left:361px;width:86px"><s></s></b>
<b class="tx"><em></em></b>
</div>
<span class="ft" style="left:270.7px;top:170.8px;font-size:12px;transform:scaleX(1.036);color:#111">NON</span>
<span class="ft" style="left:366.7px;top:170.8px;font-size:12px;transform:scaleX(1.036);color:#111">NON</span>
<div class="dr" style="top:195px">
<b class="no">7</b>
<b class="cb"></b>
<b class="cc" style="left:73px"><u class="nul"><svg width="54" height="16" viewBox="0 0 54 16"><path d="M0.5 15.5 L53.5 0.5" stroke="#ff0000" stroke-width="1" fill="none"/></svg></u><s></s></b>
<b class="cc" style="left:169px"><u style="background:#000000"></u><s></s></b>
<b class="cm" style="left:265px;width:76px"><s></s></b>
<b class="cm" style="left:361px;width:86px"><s></s></b>
<b class="tx"><em></em></b>
</div>
<span class="ft" style="left:270.7px;top:199.8px;font-size:12px;transform:scaleX(1.036);color:#111">NON</span>
<span class="ft" style="left:366.7px;top:199.8px;font-size:12px;transform:scaleX(1.036);color:#111">NON</span>
<div class="dr" style="top:224px">
<b class="no">8</b>
<b class="cb"></b>
<b class="cc" style="left:73px"><u class="nul"><svg width="54" height="16" viewBox="0 0 54 16"><path d="M0.5 15.5 L53.5 0.5" stroke="#ff0000" stroke-width="1" fill="none"/></svg></u><s></s></b>
<b class="cc" style="left:169px"><u style="background:#000000"></u><s></s></b>
<b class="cm" style="left:265px;width:76px"><s></s></b>
<b class="cm" style="left:361px;width:86px"><s></s></b>
<b class="tx"><em></em></b>
</div>
<span class="ft" style="left:270.7px;top:228.8px;font-size:12px;transform:scaleX(1.036);color:#111">NON</span>
<span class="ft" style="left:366.7px;top:228.8px;font-size:12px;transform:scaleX(1.036);color:#111">NON</span>
<div class="dr" style="top:253px">
<b class="no">9</b>
<b class="cb"></b>
<b class="cc" style="left:73px"><u class="nul"><svg width="54" height="16" viewBox="0 0 54 16"><path d="M0.5 15.5 L53.5 0.5" stroke="#ff0000" stroke-width="1" fill="none"/></svg></u><s></s></b>
<b class="cc" style="left:169px"><u style="background:#000000"></u><s></s></b>
<b class="cm" style="left:265px;width:76px"><s></s></b>
<b class="cm" style="left:361px;width:86px"><s></s></b>
<b class="tx"><em></em></b>
</div>
<span class="ft" style="left:270.7px;top:257.8px;font-size:12px;transform:scaleX(1.036);color:#111">NON</span>
<span class="ft" style="left:366.7px;top:257.8px;font-size:12px;transform:scaleX(1.036);color:#111">NON</span>
<div class="dr" style="top:282px">
<b class="no">10</b>
<b class="cb"></b>
<b class="cc" style="left:73px"><u class="nul"><svg width="54" height="16" viewBox="0 0 54 16"><path d="M0.5 15.5 L53.5 0.5" stroke="#ff0000" stroke-width="1" fill="none"/></svg></u><s></s></b>
<b class="cc" style="left:169px"><u style="background:#000000"></u><s></s></b>
<b class="cm" style="left:265px;width:76px"><s></s></b>
<b class="cm" style="left:361px;width:86px"><s></s></b>
<b class="tx"><em></em></b>
</div>
<span class="ft" style="left:270.7px;top:286.8px;font-size:12px;transform:scaleX(1.036);color:#111">NON</span>
<span class="ft" style="left:366.7px;top:286.8px;font-size:12px;transform:scaleX(1.036);color:#111">NON</span>
<div class="dr" style="top:311px">
<b class="no">11</b>
<b class="cb"></b>
<b class="cc" style="left:73px"><u class="nul"><svg width="54" height="16" viewBox="0 0 54 16"><path d="M0.5 15.5 L53.5 0.5" stroke="#ff0000" stroke-width="1" fill="none"/></svg></u><s></s></b>
<b class="cc" style="left:169px"><u style="background:#000000"></u><s></s></b>
<b class="cm" style="left:265px;width:76px"><s></s></b>
<b class="cm" style="left:361px;width:86px"><s></s></b>
<b class="tx"><em></em></b>
</div>
<span class="ft" style="left:270.7px;top:315.8px;font-size:12px;transform:scaleX(1.036);color:#111">NON</span>
<span class="ft" style="left:366.7px;top:315.8px;font-size:12px;transform:scaleX(1.036);color:#111">NON</span>
<div class="dr" style="top:340px">
<b class="no">12</b>
<b class="cb"></b>
<b class="cc" style="left:73px"><u class="nul"><svg width="54" height="16" viewBox="0 0 54 16"><path d="M0.5 15.5 L53.5 0.5" stroke="#ff0000" stroke-width="1" fill="none"/></svg></u><s></s></b>
<b class="cc" style="left:169px"><u style="background:#000000"></u><s></s></b>
<b class="cm" style="left:265px;width:76px"><s></s></b>
<b class="cm" style="left:361px;width:86px"><s></s></b>
<b class="tx"><em></em></b>
</div>
<span class="ft" style="left:270.7px;top:344.8px;font-size:12px;transform:scaleX(1.036);color:#111">NON</span>
<span class="ft" style="left:366.7px;top:344.8px;font-size:12px;transform:scaleX(1.036);color:#111">NON</span>
<div class="dr" style="top:369px">
<b class="no">13</b>
<b class="cb"></b>
<b class="cc" style="left:73px"><u class="nul"><svg width="54" height="16" viewBox="0 0 54 16"><path d="M0.5 15.5 L53.5 0.5" stroke="#ff0000" stroke-width="1" fill="none"/></svg></u><s></s></b>
<b class="cc" style="left:169px"><u style="background:#000000"></u><s></s></b>
<b class="cm" style="left:265px;width:76px"><s></s></b>
<b class="cm" style="left:361px;width:86px"><s></s></b>
<b class="tx"><em></em></b>
</div>
<span class="ft" style="left:270.7px;top:373.8px;font-size:12px;transform:scaleX(1.036);color:#111">NON</span>
<span class="ft" style="left:366.7px;top:373.8px;font-size:12px;transform:scaleX(1.036);color:#111">NON</span>
<div class="dr" style="top:398px">
<b class="no">14</b>
<b class="cb"></b>
<b class="cc" style="left:73px"><u class="nul"><svg width="54" height="16" viewBox="0 0 54 16"><path d="M0.5 15.5 L53.5 0.5" stroke="#ff0000" stroke-width="1" fill="none"/></svg></u><s></s></b>
<b class="cc" style="left:169px"><u style="background:#000000"></u><s></s></b>
<b class="cm" style="left:265px;width:76px"><s></s></b>
<b class="cm" style="left:361px;width:86px"><s></s></b>
<b class="tx"><em></em></b>
</div>
<span class="ft" style="left:270.7px;top:402.8px;font-size:12px;transform:scaleX(1.036);color:#111">NON</span>
<span class="ft" style="left:366.7px;top:402.8px;font-size:12px;transform:scaleX(1.036);color:#111">NON</span>
<div class="dr" style="top:427px">
<b class="no">15</b>
<b class="cb"></b>
<b class="cc" style="left:73px"><u class="nul"><svg width="54" height="16" viewBox="0 0 54 16"><path d="M0.5 15.5 L53.5 0.5" stroke="#ff0000" stroke-width="1" fill="none"/></svg></u><s></s></b>
<b class="cc" style="left:169px"><u style="background:#000000"></u><s></s></b>
<b class="cm" style="left:265px;width:76px"><s></s></b>
<b class="cm" style="left:361px;width:86px"><s></s></b>
<b class="tx"><em></em></b>
</div>
<span class="ft" style="left:270.7px;top:431.8px;font-size:12px;transform:scaleX(1.036);color:#111">NON</span>
<span class="ft" style="left:366.7px;top:431.8px;font-size:12px;transform:scaleX(1.036);color:#111">NON</span>
<div class="dr" style="top:456px">
<b class="no">16</b>
<b class="cb"></b>
<b class="cc" style="left:73px"><u class="nul"><svg width="54" height="16" viewBox="0 0 54 16"><path d="M0.5 15.5 L53.5 0.5" stroke="#ff0000" stroke-width="1" fill="none"/></svg></u><s></s></b>
<b class="cc" style="left:169px"><u style="background:#000000"></u><s></s></b>
<b class="cm" style="left:265px;width:76px"><s></s></b>
<b class="cm" style="left:361px;width:86px"><s></s></b>
<b class="tx"><em></em></b>
</div>
<span class="ft" style="left:270.7px;top:460.8px;font-size:12px;transform:scaleX(1.036);color:#111">NON</span>
<span class="ft" style="left:366.7px;top:460.8px;font-size:12px;transform:scaleX(1.036);color:#111">NON</span>
<div class="dr" style="top:485px">
<b class="no">17</b>
<b class="cb"></b>
<b class="cc" style="left:73px"><u class="nul"><svg width="54" height="16" viewBox="0 0 54 16"><path d="M0.5 15.5 L53.5 0.5" stroke="#ff0000" stroke-width="1" fill="none"/></svg></u><s></s></b>
<b class="cc" style="left:169px"><u style="background:#000000"></u><s></s></b>
<b class="cm" style="left:265px;width:76px"><s></s></b>
<b class="cm" style="left:361px;width:86px"><s></s></b>
<b class="tx"><em></em></b>
</div>
<span class="ft" style="left:270.7px;top:489.8px;font-size:12px;transform:scaleX(1.036);color:#111">NON</span>
<span class="ft" style="left:366.7px;top:489.8px;font-size:12px;transform:scaleX(1.036);color:#111">NON</span>
<div class="dr" style="top:514px">
<b class="no">18</b>
<b class="cb"></b>
<b class="cc" style="left:73px"><u class="nul"><svg width="54" height="16" viewBox="0 0 54 16"><path d="M0.5 15.5 L53.5 0.5" stroke="#ff0000" stroke-width="1" fill="none"/></svg></u><s></s></b>
<b class="cc" style="left:169px"><u style="background:#000000"></u><s></s></b>
<b class="cm" style="left:265px;width:76px"><s></s></b>
<b class="cm" style="left:361px;width:86px"><s></s></b>
<b class="tx"><em></em></b>
</div>
<span class="ft" style="left:270.7px;top:518.8px;font-size:12px;transform:scaleX(1.036);color:#111">NON</span>
<span class="ft" style="left:366.7px;top:518.8px;font-size:12px;transform:scaleX(1.036);color:#111">NON</span>
<div class="dr" style="top:543px">
<b class="no">19</b>
<b class="cb"></b>
<b class="cc" style="left:73px"><u class="nul"><svg width="54" height="16" viewBox="0 0 54 16"><path d="M0.5 15.5 L53.5 0.5" stroke="#ff0000" stroke-width="1" fill="none"/></svg></u><s></s></b>
<b class="cc" style="left:169px"><u style="background:#000000"></u><s></s></b>
<b class="cm" style="left:265px;width:76px"><s></s></b>
<b class="cm" style="left:361px;width:86px"><s></s></b>
<b class="tx"><em></em></b>
</div>
<span class="ft" style="left:270.7px;top:547.8px;font-size:12px;transform:scaleX(1.036);color:#111">NON</span>
<span class="ft" style="left:366.7px;top:547.8px;font-size:12px;transform:scaleX(1.036);color:#111">NON</span>
<div class="dr" style="top:572px">
<b class="no">20</b>
<b class="cb"></b>
<b class="cc" style="left:73px"><u class="nul"><svg width="54" height="16" viewBox="0 0 54 16"><path d="M0.5 15.5 L53.5 0.5" stroke="#ff0000" stroke-width="1" fill="none"/></svg></u><s></s></b>
<b class="cc" style="left:169px"><u style="background:#000000"></u><s></s></b>
<b class="cm" style="left:265px;width:76px"><s></s></b>
<b class="cm" style="left:361px;width:86px"><s></s></b>
<b class="tx"><em></em></b>
</div>
<span class="ft" style="left:270.7px;top:576.8px;font-size:12px;transform:scaleX(1.036);color:#111">NON</span>
<span class="ft" style="left:366.7px;top:576.8px;font-size:12px;transform:scaleX(1.036);color:#111">NON</span>
</div>
<div class="btn" style="left:8px"></div>
<span class="ft" style="left:32.8px;top:764.5px;font-size:12.5px;transform:scaleX(0.804);color:#111">インポート</span>
<div class="btn" style="left:108px"></div>
<span class="ft" style="left:127.9px;top:764.5px;font-size:12.5px;transform:scaleX(0.800);color:#111">エクスポート</span>
<div class="btn" style="left:208px"></div>
<span class="ft" style="left:240.9px;top:765.0px;font-size:12.5px;transform:scaleX(0.837);color:#111">クリア</span>
<div class="btn" style="left:820px"></div>
<span class="ft" style="left:858.1px;top:764.0px;font-size:12.5px;transform:scaleX(0.941);color:#111">OK</span>
<div class="btn" style="left:920px"></div>
<span class="ft" style="left:943.3px;top:764.0px;font-size:12.5px;transform:scaleX(0.829);color:#111">キャンセル</span>
</div>
</body></html>
